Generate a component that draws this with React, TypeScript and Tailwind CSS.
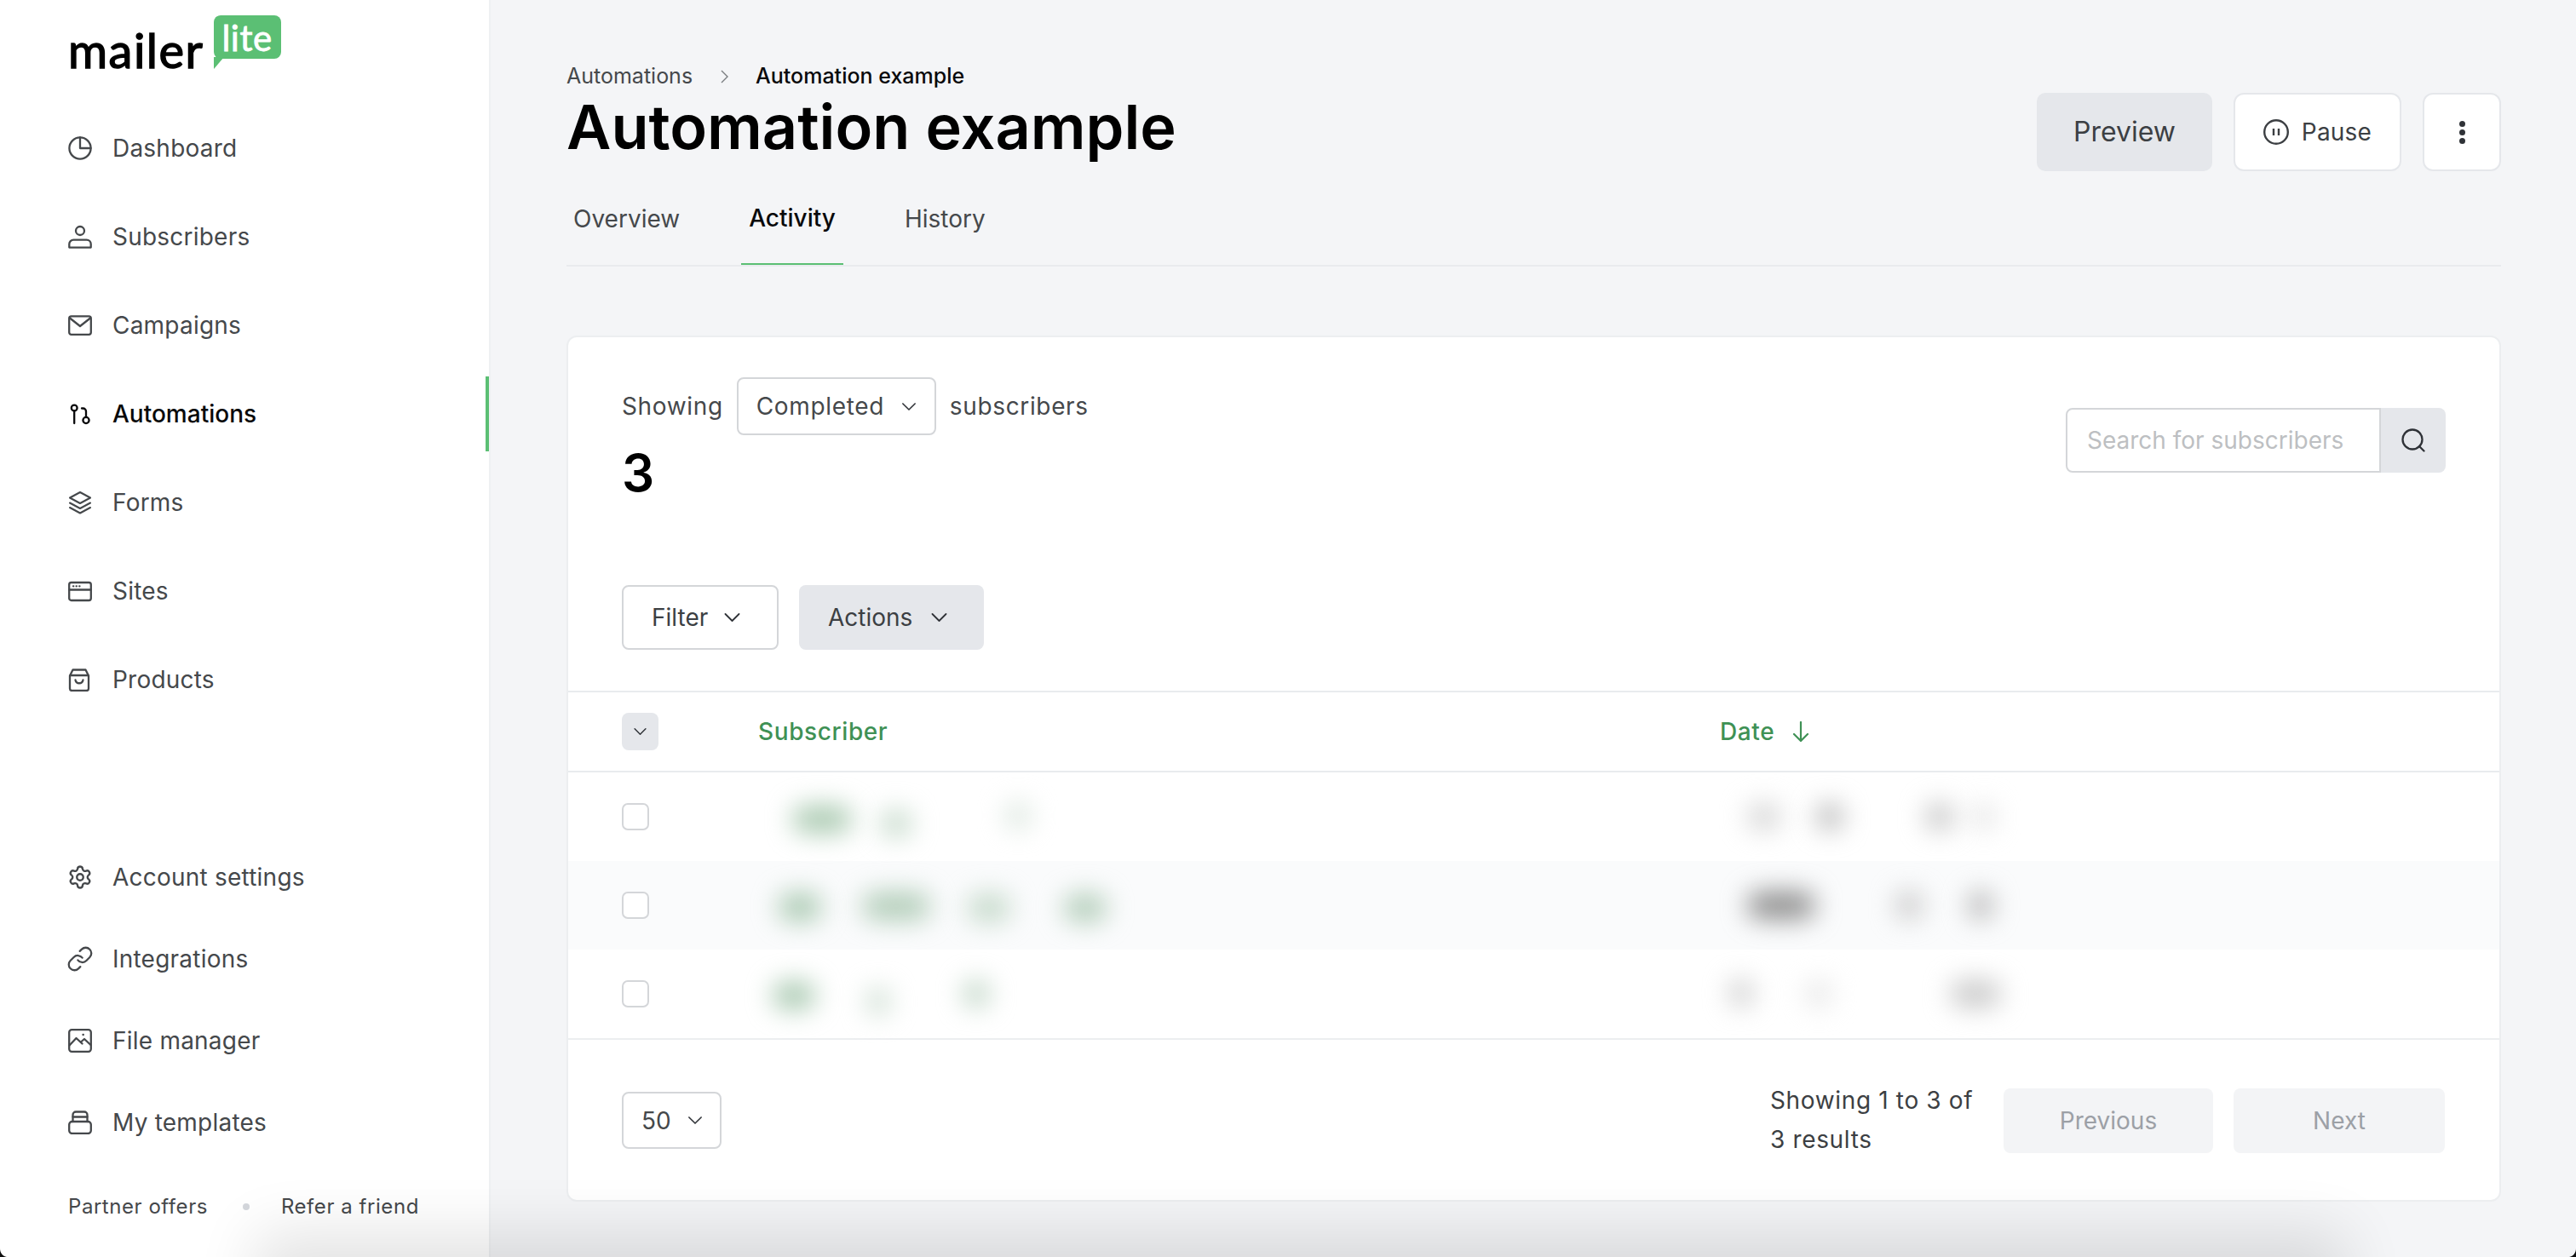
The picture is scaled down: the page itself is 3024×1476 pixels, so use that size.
import React from 'react';
import { Settings, Link as LinkIcon } from 'lucide-react';

type IconProps = { className?: string };

const Icon: React.FC<{ children: React.ReactNode; className?: string; strokeWidth?: number }> = ({ children, className = 'h-[28px] w-[28px]', strokeWidth = 2.3 }) => (
  <svg viewBox="0 0 28 28" fill="none" stroke="currentColor" strokeWidth={strokeWidth} strokeLinecap="round" strokeLinejoin="round" className={`shrink-0 ${className}`}>
    {children}
  </svg>
);

const DashboardIcon = () => (
  <Icon>
    <circle cx="14" cy="14" r="12.6" />
    <path d="M14 1.5V14h12.5" />
  </Icon>
);
const UserIcon = () => (
  <Icon>
    <circle cx="14" cy="7" r="5" />
    <path d="M1.3 26.6v-4a5 5 0 0 1 5-5h15.4a5 5 0 0 1 5 5v4z" />
  </Icon>
);
const MailIcon = () => (
  <Icon>
    <rect x="1.2" y="3.4" width="25.6" height="21.4" rx="2.5" />
    <path d="M2 5.5 14 15l12-9.5" />
  </Icon>
);
const AutomationIcon = () => (
  <Icon>
    <circle cx="7.2" cy="7" r="3.4" />
    <path d="M7.2 10.5V25" />
    <circle cx="21" cy="21.5" r="3.6" />
    <path d="M21 18V11a3.5 3.5 0 0 0-3.5-3.5H16" />
  </Icon>
);
const LayersIcon = () => (
  <Icon strokeWidth={2.1}>
    <path d="M14 2 26 8.5 14 15 2 8.5z" />
    <path d="M2 14.5 14 21l12-6.5" />
    <path d="M2 20 14 26.5 26 20" />
  </Icon>
);
const SitesIcon = () => (
  <Icon>
    <rect x="1.2" y="4" width="25.6" height="21" rx="2.5" />
    <path d="M1.2 12.5h25.6" />
    <path d="M6 8.3h.3M9.6 8.3h.3M13.2 8.3h.3" />
  </Icon>
);
const BagIcon = () => (
  <Icon>
    <path d="M5.5 2.5h15L24 9.5v15a2.5 2.5 0 0 1-2.5 2.5h-17A2.5 2.5 0 0 1 2 24.500v-15z" />
    <path d="M2.500 9h21" />
    <path d="M8.500 14.500c1 5 8 5 9 0" />
  </Icon>
);
const ImageIcon = () => (
  <Icon>
    <rect x="1.2" y="1.2" width="25.600" height="25.600" rx="3" />
    <path d="M1.500 19.500 9.500 11l7 6.500" />
    <path d="m15 15.500 4-3.500 7.500 7" />
    <path d="M17.500 7h.3" />
  </Icon>
);
const TemplateIcon = () => (
  <Icon>
    <rect x="1.2" y="13" width="25.600" height="14" rx="3.500" />
    <path d="M5.500 13V5a3.500 3.500 0 0 1 3.500-3.500h10A3.500 3.500 0 0 1 22.500 5v8" />
    <path d="M5.500 7.500h17" />
  </Icon>
);

const Chevron: React.FC<IconProps> = ({ className }) => (
  <svg viewBox="0 0 18 10" fill="none" stroke="currentColor" strokeWidth="1.8" strokeLinecap="round" strokeLinejoin="round" className={`shrink-0 ${className}`}>
    <path d="M1 1l8 8 8-8" />
  </svg>
);

const Logo = () => (
  <div className="flex h-[122px] items-start pl-[80px]">
    <span className="mt-[25px] font-['Lato',sans-serif] text-[56px] font-normal leading-[68px] tracking-[1.5px] text-black [-webkit-text-stroke:1.4px_black]">mailer</span>
    <div className="relative ml-[11px] mt-[18px] flex h-[51px] w-[79px] items-center justify-center rounded-[8px] bg-[#5bbf74]">
      <svg viewBox="0 0 12 14" className="absolute left-0 top-[49px] h-[14px] w-[12px]">
        <path d="M0 0h12L0 14z" fill="#5bbf74" />
      </svg>
      <span className="font-['Lato',sans-serif] text-[42px] font-normal leading-[48px] tracking-[0.5px] text-white [-webkit-text-stroke:0.8px_white]">lite</span>
    </div>
  </div>
);

const NavItem: React.FC<{ icon: React.ReactNode; label: string; active?: boolean; tall?: boolean }> = ({ icon, label, active, tall }) => (
  <a className={`relative flex items-center gap-[24px] pl-[80px] text-[28px] ${tall ? 'h-[104px]' : 'h-[96px]'} ${active ? 'font-medium text-[#09090b]' : 'tracking-[0.22px] text-[#45484b]'}`}>
    {icon}
    <span>{label}</span>
    {active && <span className="absolute inset-y-[8px] right-0 w-[4px] bg-[#5bbf74]" />}
  </a>
);

const Sidebar = () => (
  <aside className="flex w-[576px] shrink-0 flex-col border-r-2 border-[#eef0f2] bg-white">
    <Logo />
    <nav className="flex-1">
      <NavItem tall icon={<DashboardIcon />} label="Dashboard" />
      <NavItem tall icon={<UserIcon />} label="Subscribers" />
      <NavItem tall icon={<MailIcon />} label="Campaigns" />
      <NavItem tall active icon={<AutomationIcon />} label="Automations" />
      <NavItem tall icon={<LayersIcon />} label="Forms" />
      <NavItem tall icon={<SitesIcon />} label="Sites" />
      <NavItem tall icon={<BagIcon />} label="Products" />
    </nav>
    <div>
      <NavItem icon={<Settings className="-mx-[1px] h-[30px] w-[30px] shrink-0" strokeWidth={1.9} />} label="Account settings" />
      <NavItem icon={<LinkIcon className="-mx-[2px] h-[32px] w-[32px] shrink-0" strokeWidth={1.7} />} label="Integrations" />
      <NavItem icon={<ImageIcon />} label="File manager" />
      <NavItem icon={<TemplateIcon />} label="My templates" />
    </div>
    <div className="flex h-[110px] items-start pl-[80px] pt-[37px] text-[24px] leading-[28px] tracking-[0.55px] text-[#45484b]">
      <span>Partner offers</span>
      <span className="ml-[41px] mt-[10px] h-[8px] w-[8px] rounded-full bg-[#d4d7dc]" />
      <span className="ml-[37px]">Refer a friend</span>
    </div>
  </aside>
);

const Header = () => (
  <>
    <div className="flex items-start justify-between">
      <div>
        <div className="mb-[2px] flex h-[35px] items-center text-[25px] text-[#45484b]">
          <span>Automations</span>
          <svg viewBox="0 0 9 16" fill="none" stroke="#7a7d80" strokeWidth="1.400" className="ml-[33px] h-[16px] w-[9px]">
            <path d="M1 1l7 7-7 7" />
          </svg>
          <span className="ml-[32px] font-medium text-[#09090b]">Automation example</span>
        </div>
        <h1 className="text-[72px] font-semibold leading-[80px] text-black">Automation example</h1>
      </div>
      <div className="mt-[37px] flex gap-[25px]">
        <button className="h-[92px] w-[206px] rounded-[10px] bg-[#e5e7eb] text-[32px] text-[#3c3f43]">Preview</button>
        <button className="flex h-[92px] w-[197px] items-center justify-center gap-[15px] rounded-[12px] border-2 border-[#e5e7eb] bg-white text-[28px] tracking-[0.2px] text-[#3c3f43]">
          <svg viewBox="0 0 30 30" fill="none" stroke="currentColor" className="h-[30px] w-[30px]">
            <circle cx="15" cy="15" r="13.800" strokeWidth="2.400" />
            <path d="M12 11v8M18 11v8" strokeWidth="2.400" />
          </svg>
          <span>Pause</span>
        </button>
        <button className="flex h-[92px] w-[92px] flex-col items-center justify-center gap-[3px] rounded-[12px] border-2 border-[#e5e7eb] bg-white">
          <span className="h-[7px] w-[7px] rounded-full bg-[#2f3237]" />
          <span className="h-[7px] w-[7px] rounded-full bg-[#2f3237]" />
          <span className="h-[7px] w-[7px] rounded-full bg-[#2f3237]" />
        </button>
      </div>
    </div>
    <div className="mt-[2px] flex h-[110px] gap-[64px] border-b-2 border-[#e9ebee] text-[28px] text-[#45484b]">
      <a className="flex h-[108px] items-center px-[8px]">Overview</a>
      <a className="flex h-[108px] items-center border-b-2 border-[#5bbf74] px-[9px] font-medium text-[#09090b]">Activity</a>
      <a className="flex h-[108px] items-center px-[8px]">History</a>
    </div>
  </>
);

const Blur: React.FC<{ className: string }> = ({ className }) => <span className={`h-[32px] shrink-0 rounded-full blur-[15px] ${className}`} />;

const rows = [
  {
    bg: 'bg-white',
    name: [
      'ml-[40px] w-[70px] bg-[#a9c9b0] mt-[6px]',
      'ml-[34px] w-[36px] bg-[#c3d8c8] mt-[16px]',
      'ml-[110px] w-[30px] bg-[#dbe6de] mt-[-2px]',
    ],
    date: [
      'ml-[32px] w-[40px] bg-[#d6d6d6]',
      'ml-[42px] w-[30px] bg-[#b4b4b4]',
      'ml-[97px] w-[34px] bg-[#c4c4c4]',
      'ml-[25px] w-[20px] bg-[#dedede]',
    ],
  },
  {
    bg: 'bg-[#fafbfc]',
    name: [
      'ml-[24px] w-[50px] bg-[#a6c7ae] mt-[4px]',
      'ml-[48px] w-[80px] bg-[#afcbb6] mt-[2px]',
      'ml-[44px] w-[50px] bg-[#c3d8c8] mt-[6px]',
      'ml-[63px] w-[50px] bg-[#afcbb6] mt-[6px]',
    ],
    date: [
      'ml-[32px] w-[80px] bg-[#8c8c8c]',
      'ml-[95px] w-[30px] bg-[#c4c4c4]',
      'ml-[56px] w-[26px] bg-[#acacac]',
    ],
  },
  {
    bg: 'bg-white',
    name: [
      'ml-[17px] w-[50px] bg-[#a6c7ae] mt-[4px]',
      'ml-[61px] w-[26px] bg-[#cbdccf] mt-[18px]',
      'ml-[87px] w-[30px] bg-[#bbd2c1]',
    ],
    date: [
      'ml-[12px] w-[26px] bg-[#cacaca] mt-[-2px]',
      'ml-[63px] w-[30px] bg-[#e6e6e6]',
      'ml-[139px] w-[60px] bg-[#cacaca]',
    ],
  },
];

const Card = () => (
  <section className="mt-[81px] rounded-[12px] border-2 border-[#eceef0] bg-white">
    <div className="flex items-start justify-between px-[63px] pt-[47px]">
      <div>
        <div className="flex h-[68px] items-center text-[28px] tracking-[0.65px] text-[#45484b]">
          <span>Showing</span>
          <div className="ml-[16px] flex h-[68px] w-[234px] items-center rounded-[8px] border-2 border-[#d4d6d9] pl-[21px] text-[#45484b]">
            <span>Completed</span>
            <Chevron className="ml-[21px] h-[9px] w-[16px] text-[#2f3237]" />
          </div>
          <span className="ml-[16px]">subscribers</span>
        </div>
        <div className="mt-[8px] text-[60px] font-semibold leading-[72px] text-black">3</div>
      </div>
      <div className="mt-[36px] flex h-[76px]">
        <div className="flex w-[370px] items-center rounded-l-[8px] border-2 border-[#d4d6d9] pl-[23px] text-[28px] text-[#bdbfc2]">Search for subscribers</div>
        <div className="flex w-[76px] items-center justify-center rounded-r-[8px] bg-[#e5e7eb] text-[#2f3237]">
          <Icon>
            <circle cx="13" cy="13" r="11.500" />
            <path d="m21 21 5.500 5.500" />
          </Icon>
        </div>
      </div>
    </div>

    <div className="flex gap-[24px] px-[63px] pb-[48px] pt-[96px] text-[28px] text-[#3c3f43]">
      <button className="flex h-[76px] w-[184px] items-center rounded-[8px] border-2 border-[#d4d6d9] pl-[33px]">
        <span>Filter</span>
        <Chevron className="ml-[19px] h-[10px] w-[19px] text-[#2f3237]" />
      </button>
      <button className="flex h-[76px] w-[217px] items-center rounded-[8px] bg-[#e5e7eb] pl-[34px]">
        <span>Actions</span>
        <Chevron className="ml-[22px] h-[10px] w-[19px] text-[#2f3237]" />
      </button>
    </div>

    <div className="grid h-[96px] grid-cols-[160px_1129px_1fr] items-center border-y-2 border-[#e9ebee] pl-[63px] text-[28px] font-medium text-[#3f9155]">
      <div className="flex h-[44px] w-[43px] items-center justify-center rounded-[8px] bg-[#e5e7eb] text-[#2f3237]">
        <Chevron className="h-[8px] w-[15px]" />
      </div>
      <span className="tracking-[0.6px]">Subscriber</span>
      <div className="flex items-center gap-[21px]">
        <span className="tracking-[0.6px]">Date</span>
        <svg viewBox="0 0 20 24" fill="none" stroke="currentColor" strokeWidth="2.200" strokeLinecap="round" strokeLinejoin="round" className="h-[24px] w-[20px]">
          <path d="M10 1v22M2 15l8 8 8-8" />
        </svg>
      </div>
    </div>

    {rows.map((row, index) => (
      <div key={index} className={`grid h-[104px] grid-cols-[160px_1129px_1fr] items-center pl-[63px] ${row.bg}`}>
        <span className="h-[32px] w-[32px] rounded-[7px] border-2 border-[#d4d6d9] bg-white" />
        <div className="flex items-center">
          {row.name.map((cls, i) => <Blur key={i} className={cls} />)}
        </div>
        <div className="flex items-center">
          {row.date.map((cls, i) => <Blur key={i} className={cls} />)}
        </div>
      </div>
    ))}

    <div className="flex h-[190px] items-center justify-between border-t-2 border-[#eceef0] pl-[63px] pr-[64px] pt-[1px]">
      <div className="flex h-[67px] w-[117px] items-center rounded-[8px] border-2 border-[#d4d6d9] pl-[21px] text-[28px] text-[#45484b]">
        <span>50</span>
        <Chevron className="ml-[20px] h-[9px] w-[16px] text-[#2f3237]" />
      </div>
      <div className="flex items-center">
        <p className="-mt-[2px] mr-[24px] w-[250px] text-[28px] leading-[46px] tracking-[0.65px] text-[#3c3f43]">Showing 1 to 3 of 3 results</p>
        <div className="flex gap-[24px] text-[28px] text-[#9ca0a6]">
          <button className="h-[76px] w-[246px] rounded-[8px] bg-[#f3f4f6]">Previous</button>
          <button className="h-[76px] w-[248px] rounded-[8px] bg-[#f3f4f6]">Next</button>
        </div>
      </div>
    </div>
  </section>
);

export default function App() {
  return (
    <div className="relative flex h-[1476px] overflow-hidden bg-[#f4f5f7] font-['Inter',sans-serif]">
      <Sidebar />
      <main className="flex-1 pl-[89px] pr-[88px] pt-[72px]">
        <Header />
        <Card />
      </main>
      {/* window shadow bleeding up from below the fold */}
      <div className="absolute bottom-[-60px] left-[330px] right-[300px] h-[60px] shadow-[0_0_70px_30px_rgba(0,0,0,0.11)]" />
      <svg viewBox="0 0 8 10" className="absolute bottom-0 left-0 h-[10px] w-[8px]"><path d="M0 0c0 5 3 9 8 10H0z" fill="#111" /></svg>
      <svg viewBox="0 0 8 10" className="absolute bottom-0 right-0 h-[10px] w-[8px]"><path d="M8 0c0 5-3 9-8 10h8z" fill="#111" /></svg>
    </div>
  );
}
